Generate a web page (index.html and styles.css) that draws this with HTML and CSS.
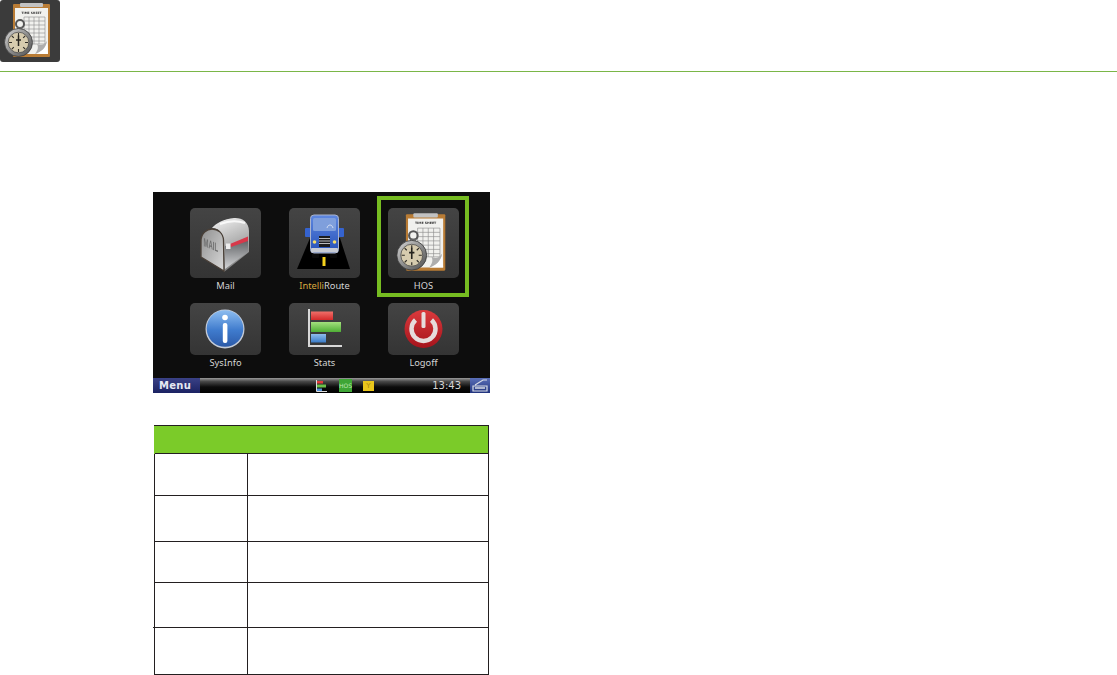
FILE: index.html
```html
<!DOCTYPE html>
<html lang="en">
<head>
  <meta charset="UTF-8" />
  <title>HOS</title>
  <link rel="stylesheet" href="styles.css">
</head>
<body>
  <svg class="svg-defs" aria-hidden="true">
    <defs>
      <linearGradient id="steel" x1="0" y1="0" x2="1" y2="1">
        <stop offset="0" stop-color="#d8d8d8"/>
        <stop offset="0.5" stop-color="#8f8f8f"/>
        <stop offset="1" stop-color="#4e4e4e"/>
      </linearGradient>
      <linearGradient id="box" x1="0" y1="0" x2="0.3" y2="1">
        <stop offset="0" stop-color="#f5f5f5"/>
        <stop offset="0.4" stop-color="#c4c4c4"/>
        <stop offset="1" stop-color="#808080"/>
      </linearGradient>
      <linearGradient id="boxfront" x1="0" y1="0" x2="1" y2="1">
        <stop offset="0" stop-color="#8f8f8f"/>
        <stop offset="1" stop-color="#dadada"/>
      </linearGradient>
      <linearGradient id="inside" x1="0" y1="0" x2="0" y2="1">
        <stop offset="0" stop-color="#5b5d60"/>
        <stop offset="1" stop-color="#d5d6d8"/>
      </linearGradient>
      <linearGradient id="blueball" x1="0" y1="0" x2="0" y2="1">
        <stop offset="0" stop-color="#8dbdf0"/>
        <stop offset="0.55" stop-color="#3f7bcd"/>
        <stop offset="1" stop-color="#2c5aa8"/>
      </linearGradient>
      <linearGradient id="redball" x1="0" y1="0" x2="0" y2="1">
        <stop offset="0" stop-color="#dc3a3d"/>
        <stop offset="1" stop-color="#a5141c"/>
      </linearGradient>
      <linearGradient id="cab" x1="0" y1="0" x2="0" y2="1">
        <stop offset="0" stop-color="#5f88e0"/>
        <stop offset="1" stop-color="#2450b8"/>
      </linearGradient>
      <linearGradient id="bar-red" x1="0" y1="0" x2="0" y2="1">
        <stop offset="0" stop-color="#f0706a"/>
        <stop offset="1" stop-color="#d42a2a"/>
      </linearGradient>
      <linearGradient id="bar-green" x1="0" y1="0" x2="0" y2="1">
        <stop offset="0" stop-color="#a4e07e"/>
        <stop offset="1" stop-color="#4fae35"/>
      </linearGradient>
      <linearGradient id="bar-blue" x1="0" y1="0" x2="0" y2="1">
        <stop offset="0" stop-color="#8ebcec"/>
        <stop offset="1" stop-color="#3b7cc8"/>
      </linearGradient>

      <symbol id="hos-icon" viewBox="0 0 60 62">
        <rect x="13" y="4" width="37" height="53" rx="1" fill="#b97c35"/>
        <rect x="15" y="8" width="33" height="46" fill="#f1f1ee"/>
        <rect x="20" y="3" width="23" height="4" rx="1" fill="#c2c2c2"/>
        <text x="31.500" y="13.500" class="sheet-title">TIME SHEET</text>
        <path d="M24 17h21v27H24zM24 21h21M24 25h21M24 29h21M24 33h21M24 37h21M24 41h21M29 17v27M34 17v27M39 17v27" fill="none" stroke="#8c8c8c" stroke-width=".6"/>
        <path d="M35 54 C41 52 46 48 47 41 L48 54 Z" fill="#fff"/>
        <path d="M35 54 C39 49 38 46 37 44 C41 46 44 45 47 41 C46 48 41 52 35 54 Z" fill="#aeaeae"/>
        <circle cx="20" cy="24" r="4" fill="none" stroke="#555" stroke-width="2"/>
        <rect x="17" y="27" width="5.500" height="4" fill="#666"/>
        <circle cx="18.500" cy="42.500" r="14" fill="url(#steel)" stroke="#333" stroke-width=".7"/>
        <circle cx="18.500" cy="42.500" r="10.300" fill="#d6cbae" stroke="#444" stroke-width=".7"/>
        <path d="M18.500 33v3M18.500 49v3M9 42.500h3M25 42.500h3M11.800 35.800l2 2M23.200 47.200l2 2M25.200 35.800l-2 2M13.800 47.200l-2 2" stroke="#2e2b26" stroke-width="1.100"/>
        <path d="M18.500 35.500v10.500M16 40h5" stroke="#26241f" stroke-width="1.500"/>
      </symbol>
    </defs>
  </svg>

  <header class="page-header">
    <svg class="header-icon" viewBox="0 0 60 62"><rect width="60" height="62" rx="3" fill="#3b3b3b"/><use href="#hos-icon" width="60" height="62"/></svg>
  </header>

  <main class="page-content">
    <div class="screen">
      <div class="app-grid">
        <div class="app">
          <div class="app-tile">
            <svg class="app-icon" viewBox="0 0 71 70">
              <path d="M22 20 C26 15 34 11 44 10 C52 9.500 59 14 59 23 L59 44 L34 64 L33 30 C32 24 28 20 22 20 Z" fill="url(#box)"/>
              <path d="M30 16 C38 13 46 12 55 15" fill="none" stroke="#fff" stroke-width="2" opacity=".8"/>
              <path d="M35 38 L58 31 L58 44 L35 61 Z" fill="url(#inside)"/>
              <path d="M40 36 L58 28.500 L58 33 L41 39 Z" fill="#d8384a"/>
              <rect x="36" y="35.500" width="4.500" height="5.500" fill="#eee"/>
              <path d="M11 33 C11 25 17 21 22 21 C28 21 33 25 33.500 32 L34 63 L11 49 Z" fill="url(#boxfront)" stroke="#4a4038" stroke-width="1.300"/>
              <text class="mail-stamp" transform="translate(13.500 38) skewY(22) scale(.85 1.700)">MAIL</text>
            </svg>
          </div>
          <span class="app-label">Mail</span>
        </div>
        <div class="app">
          <div class="app-tile">
            <svg class="app-icon" viewBox="0 0 71 70">
              <path d="M21 30 H51 L61 61 H8 Z" fill="#000"/>
              <rect x="33.500" y="49" width="3" height="9" fill="#f5d21c"/>
              <rect x="23" y="44" width="7" height="6" rx="1" fill="#0a0a0a"/>
              <rect x="41" y="44" width="7" height="6" rx="1" fill="#0a0a0a"/>
              <rect x="16" y="20" width="6" height="9" rx="1" fill="#3563cf"/>
              <rect x="49" y="20" width="6" height="9" rx="1" fill="#3563cf"/>
              <rect x="21.500" y="7" width="28" height="38" rx="3.500" fill="url(#cab)" stroke="#aab4cc" stroke-width="1"/>
              <rect x="24" y="10" width="23" height="13" rx="1.500" fill="#7f9fdc"/>
              <path d="M38 20 C39 16 43 16 44 20" fill="none" stroke="#e6ecf8" stroke-width=".8"/>
              <rect x="30" y="28" width="11" height="11" fill="#1d1d1d"/>
              <path d="M30 30.500h11M30 33h11M30 35.500h11" stroke="#bcbcbc" stroke-width="1"/>
              <circle cx="25.500" cy="34" r="1.800" fill="#f3dc6a"/>
              <circle cx="45.500" cy="34" r="1.800" fill="#f3dc6a"/>
              <rect x="22" y="40" width="27" height="4.500" rx="1" fill="#c8ccd4"/>
            </svg>
          </div>
          <span class="app-label"><span class="app-label-accent">Intelli</span>Route</span>
        </div>
        <div class="app">
          <div class="app-tile">
            <svg class="app-icon app-icon-hos" viewBox="0 0 60 62"><use href="#hos-icon" width="60" height="62"/></svg>
          </div>
          <span class="app-label">HOS</span>
          <div class="app-highlight"></div>
        </div>
        <div class="app">
          <div class="app-tile app-tile-short">
            <svg class="app-icon" viewBox="0 0 71 52">
              <circle cx="35" cy="26" r="19.500" fill="#c5ccd8"/>
              <circle cx="35" cy="25.500" r="18.300" fill="url(#blueball)"/>
              <circle cx="35" cy="14.500" r="2.800" fill="#fff"/>
              <rect x="32.800" y="20" width="4.600" height="20" rx="2" fill="#fff"/>
            </svg>
          </div>
          <span class="app-label">SysInfo</span>
        </div>
        <div class="app">
          <div class="app-tile app-tile-short">
            <svg class="app-icon" viewBox="0 0 71 52">
              <path d="M20 6 V43 H53" fill="none" stroke="#d8d8d8" stroke-width="2"/>
              <rect x="22" y="8.500" width="22" height="8.500" fill="url(#bar-red)"/>
              <rect x="22" y="19" width="30" height="10" fill="url(#bar-green)"/>
              <rect x="22" y="31" width="15" height="8.500" fill="url(#bar-blue)"/>
            </svg>
          </div>
          <span class="app-label">Stats</span>
        </div>
        <div class="app">
          <div class="app-tile app-tile-short">
            <svg class="app-icon" viewBox="0 0 71 52">
              <circle cx="35.500" cy="26" r="19" fill="url(#redball)"/>
              <path d="M27.500 17 A12 12 0 1 0 43.500 17" fill="none" stroke="#e6dcdc" stroke-width="4.500"/>
              <rect x="33.500" y="9" width="4" height="16" rx="1.500" fill="#e6dcdc"/>
            </svg>
          </div>
          <span class="app-label">Logoff</span>
        </div>
      </div>

      <div class="taskbar">
        <span class="menu-button">Menu</span>
        <div class="status-icons">
          <svg class="status-stats" viewBox="0 0 11 12">
            <path d="M.5 0v11.500H11" fill="none" stroke="#ddd"/>
            <rect x="1" y="1" width="6" height="2.500" fill="#e23b3b"/>
            <rect x="1" y="4.500" width="9" height="3" fill="#6cc04a"/>
            <rect x="1" y="8.500" width="5" height="2.500" fill="#4f8fd6"/>
          </svg>
          <span class="status-hos">HOS</span>
          <span class="status-mail">Y</span>
        </div>
        <span class="clock">13:43</span>
        <span class="tray-button">
          <svg viewBox="0 0 16 13"><path d="M3 6 L11 1 H15 M1 7 H15 V12 H1 Z" fill="none" stroke="#d8dce6" stroke-width="1.200"/><path d="M3 9h10" stroke="#d8dce6" stroke-width="1.500"/></svg>
        </span>
      </div>
    </div>

    <table class="info-table">
      <colgroup>
        <col class="col-key">
        <col>
      </colgroup>
      <tr class="info-head"><th colspan="2"></th></tr>
      <tr class="row-a"><td></td><td></td></tr>
      <tr class="row-b"><td></td><td></td></tr>
      <tr class="row-c"><td></td><td></td></tr>
      <tr class="row-d"><td></td><td></td></tr>
      <tr class="row-e"><td class="cell-notch"></td><td></td></tr>
    </table>
  </main>
</body>
</html>
```

FILE: styles.css
```css
* { margin: 0; padding: 0; box-sizing: border-box; }

:root {
  --rule-green: #7ab648;
  --frame-green: #76bc21;
  --table-green: #7bcb29;
  --table-line: #231f20;
}

html, body {
  height: 675px;
  overflow: hidden;
}

body {
  background: white;
  font-family: 'DejaVu Sans', sans-serif;
}

.svg-defs {
  display: block;
  width: 0;
  height: 0;
}

.page-header {
  height: 72px;
  border-bottom: 1px solid var(--rule-green);
}

.header-icon {
  display: block;
  width: 60px;
  height: 62px;
  filter: blur(0.4px);
}

.page-content {
  padding: 120px 0 0 153px;
}

.screen {
  width: 337px;
  height: 201px;
  background: #0d0d0d;
  display: flex;
  flex-direction: column;
  justify-content: space-between;
}

.app-grid {
  display: grid;
  grid-template-columns: repeat(3, 71px);
  column-gap: 28px;
  row-gap: 9px;
  padding: 16px 0 0 37px;
}

.app {
  position: relative;
  display: flex;
  flex-direction: column;
  align-items: center;
}

.app-tile {
  width: 71px;
  height: 70px;
  background: linear-gradient(180deg, #444, #343434);
  border-radius: 5px;
  display: flex;
  align-items: center;
  justify-content: center;
}

.app-tile-short {
  height: 52px;
}

.app-icon {
  display: block;
  width: 100%;
  height: 100%;
  filter: blur(0.4px);
}

.app-icon-hos {
  width: 64px;
  height: 66px;
}

.app-label {
  height: 16px;
  line-height: 16px;
  font-family: 'Noto Sans', sans-serif;
  font-size: 9.3px;
  color: #d4d4d4;
}

.app-label-accent {
  color: #d9a93f;
}

.app-highlight {
  position: absolute;
  left: -11px;
  top: -12px;
  width: 92px;
  height: 101px;
  border: 4px solid var(--frame-green);
}

.sheet-title {
  font-family: 'DejaVu Sans', sans-serif;
  font-size: 3px;
  font-weight: bold;
  fill: #333;
  text-anchor: middle;
}

.mail-stamp {
  font-family: 'Liberation Sans', sans-serif;
  font-size: 7px;
  font-weight: bold;
  fill: #6f6f6f;
}

.taskbar {
  height: 15px;
  display: flex;
  align-items: center;
  background: linear-gradient(180deg, #9a9a9a 0, #4a4a4a 22%, #0b0b0b 60%, #000 100%);
  color: #d5d5d5;
}

.menu-button {
  width: 47px;
  height: 100%;
  padding-left: 6px;
  background: linear-gradient(180deg, #3a4186, #1b2262);
  color: #e6e8f2;
  font-size: 10px;
  font-weight: bold;
  letter-spacing: 0.3px;
  line-height: 15px;
}

.status-icons {
  display: flex;
  align-items: center;
  margin-left: 116px;
}

.status-stats {
  width: 11px;
  height: 12px;
  display: block;
}

.status-hos {
  width: 13px;
  height: 13px;
  margin-left: 12px;
  background: #3ea535;
  color: #bfe6b4;
  font-size: 6px;
  line-height: 13px;
  text-align: center;
}

.status-mail {
  width: 11px;
  height: 10px;
  margin-left: 11px;
  background: #eac61c;
  color: #a88510;
  font-size: 7px;
  line-height: 10px;
  text-align: center;
}

.clock {
  margin-left: auto;
  margin-right: 9px;
  font-size: 10px;
}

.tray-button {
  width: 20px;
  height: 100%;
  background: linear-gradient(180deg, #5a6fb8, #22347e);
  display: flex;
  align-items: center;
  justify-content: center;
}

.tray-button svg {
  width: 16px;
  height: 13px;
}

.info-table {
  width: 335px;
  margin: 32px 0 0 1px;
  border-collapse: collapse;
  table-layout: fixed;
}

.info-table th,
.info-table td {
  border: 1px solid var(--table-line);
}

.info-table th {
  background: var(--table-green);
  border-bottom: 0;
  border-left-color: var(--table-green);
}

.col-key {
  width: 93px;
}

.cell-notch {
  position: relative;
}

/* the top rule of the last row runs a little past the table edge */
.cell-notch::before {
  content: "";
  position: absolute;
  left: -2px;
  top: -1px;
  width: 2px;
  height: 1px;
  background: var(--table-line);
}

.info-head { height: 28px; }
.row-a { height: 42px; }
.row-b { height: 46px; }
.row-c { height: 41px; }
.row-d { height: 45px; }
.row-e { height: 47px; }
```
